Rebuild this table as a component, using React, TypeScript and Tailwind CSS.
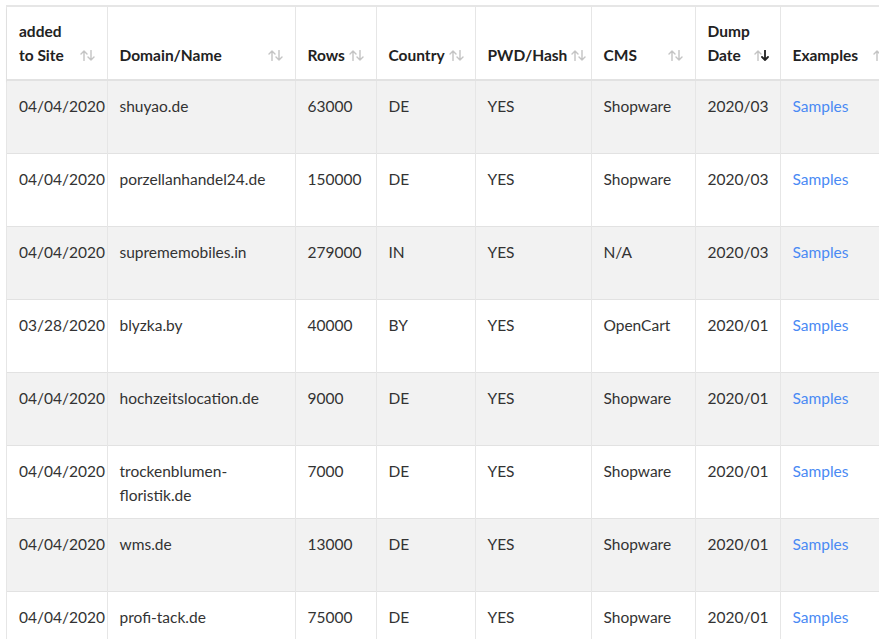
import React from "react";

const rows = [
  ["04/04/2020", "shuyao.de", "63000", "DE", "YES", "Shopware", "2020/03"],
  ["04/04/2020", "porzellanhandel24.de", "150000", "DE", "YES", "Shopware", "2020/03"],
  ["04/04/2020", "suprememobiles.in", "279000", "IN", "YES", "N/A", "2020/03"],
  ["03/28/2020", "blyzka.by", "40000", "BY", "YES", "OpenCart", "2020/01"],
  ["04/04/2020", "hochzeitslocation.de", "9000", "DE", "YES", "Shopware", "2020/01"],
  ["04/04/2020", "trockenblumen-floristik.de", "7000", "DE", "YES", "Shopware", "2020/01"],
  ["04/04/2020", "wms.de", "13000", "DE", "YES", "Shopware", "2020/01"],
  ["04/04/2020", "profi-tack.de", "75000", "DE", "YES", "Shopware", "2020/01"],
];

const cols: { label: React.ReactNode; w: string; active?: boolean }[] = [
  { label: <>added<br />to Site</>, w: "w-[100px]" },
  { label: "Domain/Name", w: "w-[188px]" },
  { label: "Rows", w: "w-[81px]" },
  { label: "Country", w: "w-[99px]" },
  { label: "PWD/Hash", w: "w-[116px]" },
  { label: "CMS", w: "w-[104px]" },
  { label: <>Dump<br />Date</>, w: "w-[85px]", active: true },
  { label: "Examples", w: "w-[120px]" },
];

function SortIcon({ active }: { active?: boolean }) {
  return (
    <svg width="15" height="11" viewBox="0 0 15 11" className="shrink-0 mb-[6px]">
      <g stroke="#c4c4c4" strokeWidth="1.4" fill="none" strokeLinecap="round" strokeLinejoin="round">
        <path d="M4 10.5V1M1 4l3-3 3 3" />
      </g>
      <g stroke={active ? "#222" : "#c4c4c4"} strokeWidth={active ? 1.8 : 1.4} fill="none" strokeLinecap="round" strokeLinejoin="round">
        <path d="M11 0.5V10M8 7l3 3 3-3" />
      </g>
    </svg>
  );
}

export default function App() {
  return (
    <div className="w-[879px] h-[639px] overflow-hidden bg-white pt-[5px] pl-[6px]" style={{ fontFamily: '"Lato", "Noto Sans", sans-serif' }}>
      <div className="border-t-2 border-l border-[#e6e6e6] w-[960px]">
        <table className="table-fixed w-[893px] border-collapse text-[15.5px] leading-6">
          <thead>
            <tr className="shadow-[0_2px_2px_rgba(0,0,0,0.08)] border-b-2 border-[#e2e2e2]">
              {cols.map((c, i) => (
                <th key={i} className={`${c.w} h-[72px] px-3 py-3 text-left align-bottom font-bold text-[#222] border-r border-[#e6e6e6]`}>
                  <div className="flex items-end justify-between gap-1">
                    <span>{c.label}</span>
                    <SortIcon active={c.active} />
                  </div>
                </th>
              ))}
            </tr>
          </thead>
          <tbody className="text-[#333]">
            {rows.map((r, i) => (
              <tr key={i} className={`${i % 2 === 0 ? "bg-[#f2f2f2]" : "bg-white"} border-b border-[#e2e2e2]`}>
                {r.map((v, j) => (
                  <td key={j} className="h-[73px] px-3 pt-[13px] align-top border-r border-[#e6e6e6]">
                    {j === 1 && v.includes("-") && v.length > 20 ? (
                      <>trockenblumen-<br />floristik.de</>
                    ) : (
                      v
                    )}
                  </td>
                ))}
                <td className="h-[73px] px-3 pt-[13px] align-top text-[#4a8af4]">Samples</td>
              </tr>
            ))}
          </tbody>
        </table>
      </div>
    </div>
  );
}
